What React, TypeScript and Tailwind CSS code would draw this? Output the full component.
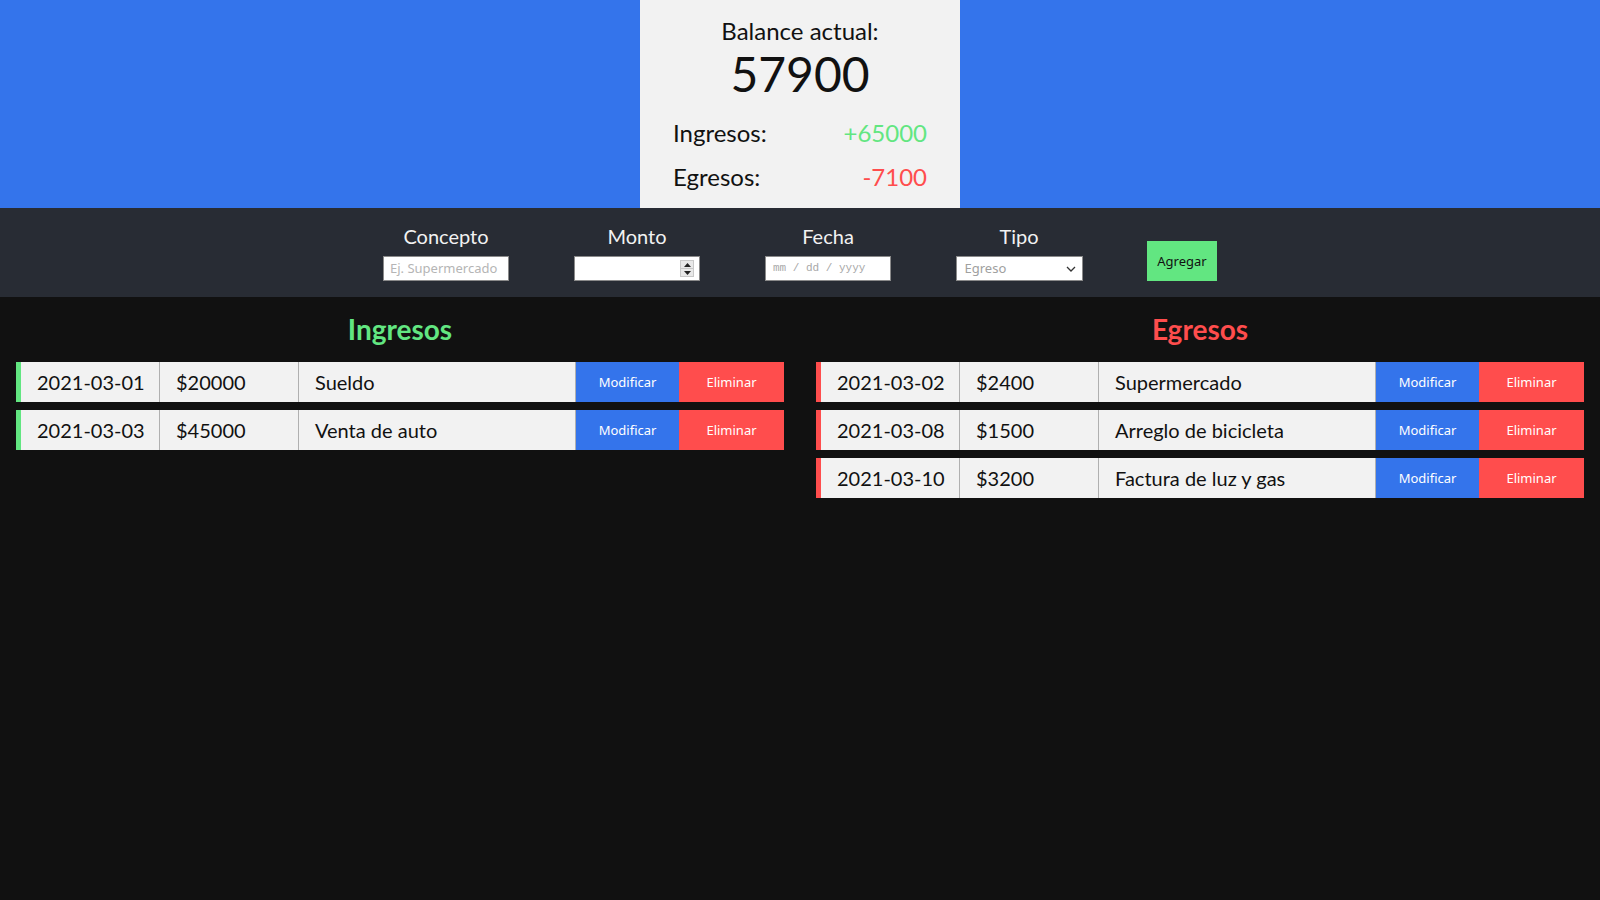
import React from "react";

type Item = { date: string; amount: string; desc: string };

const ingresos: Item[] = [
  { date: "2021-03-01", amount: "$20000", desc: "Sueldo" },
  { date: "2021-03-03", amount: "$45000", desc: "Venta de auto" },
];

const egresos: Item[] = [
  { date: "2021-03-02", amount: "$2400", desc: "Supermercado" },
  { date: "2021-03-08", amount: "$1500", desc: "Arreglo de bicicleta" },
  { date: "2021-03-10", amount: "$3200", desc: "Factura de luz y gas" },
];

const btnFont = { fontFamily: '"Noto Sans", "Open Sans", sans-serif' } as const;

function Row({ item, kind }: { item: Item; kind: "in" | "out" }) {
  return (
    <div
      className={
        "flex h-[40px] bg-[#f2f2f2] text-[20px] text-[#111] border-l-[5px] " +
        (kind === "in" ? "border-[#62e681]" : "border-[#ff4d4d]")
      }
    >
      <div className="w-[139px] shrink-0 border-r border-[#b0b0b0] pl-[16px] flex items-center">
        {item.date}
      </div>
      <div className="w-[139px] shrink-0 border-r border-[#b0b0b0] pl-[16px] flex items-center">
        {item.amount}
      </div>
      <div className="flex-1 border-r border-[#b0b0b0] pl-[16px] flex items-center">
        {item.desc}
      </div>
      <div
        className="w-[103px] shrink-0 bg-[#3474eb] text-white text-[13px] pt-[2px] flex items-center justify-center"
        style={btnFont}
      >
        Modificar
      </div>
      <div
        className="w-[105px] shrink-0 bg-[#ff4d4d] text-white text-[13px] pt-[2px] flex items-center justify-center"
        style={btnFont}
      >
        Eliminar
      </div>
    </div>
  );
}

function Column({ title, items, kind }: { title: string; items: Item[]; kind: "in" | "out" }) {
  return (
    <div className="flex-1 px-[16px] pt-[15px]">
      <h2
        className={
          "text-center font-bold text-[28px] leading-[34px] mb-[16px] " +
          (kind === "in" ? "text-[#62e681]" : "text-[#ff4d4d]")
        }
      >
        {title}
      </h2>
      <div className="flex flex-col gap-[8px]">
        {items.map((it) => (
          <Row key={it.date} item={it} kind={kind} />
        ))}
      </div>
    </div>
  );
}

function Field({ label, children }: { label: string; children: React.ReactNode }) {
  return (
    <div className="flex flex-col items-center w-[126px]">
      <div className="text-[20px] leading-[24px] text-[#f2f2f2] mb-[8px] whitespace-nowrap">{label}</div>
      {children}
    </div>
  );
}

export default function App() {
  return (
    <div
      className="min-h-[900px] bg-[#111111] text-[#111]"
      style={{ fontFamily: 'Lato, "Noto Sans", sans-serif' }}
    >
      <header className="bg-[#3474eb] h-[208px] flex justify-center">
        <div className="w-[320px] bg-[#f2f2f2] pt-[16px] px-[33px] text-[#111]">
          <div className="text-center text-[24px] leading-[29px]">Balance actual:</div>
          <div className="text-center text-[48px] leading-[58px]">57900</div>
          <div className="flex justify-between text-[24px] leading-[29px] mt-[15px]">
            <span>Ingresos:</span>
            <span className="text-[#62e681]">+65000</span>
          </div>
          <div className="flex justify-between text-[24px] leading-[29px] mt-[15px]">
            <span>Egresos:</span>
            <span className="text-[#ff4d4d]">-7100</span>
          </div>
        </div>
      </header>

      <div className="bg-[#282c34] h-[89px] pt-[16px] flex justify-center items-start gap-[65px]">
        <Field label="Concepto">
          <div
            className="w-[126px] h-[25px] bg-white border border-[#8a8a8a] px-[6px] flex items-center text-[13px] text-[#b5b5b5]"
            style={btnFont}
          >
            Ej. Supermercado
          </div>
        </Field>
        <Field label="Monto">
          <div className="w-[126px] h-[25px] bg-white border border-[#8a8a8a] flex items-center justify-end pr-[5px]">
            <div className="w-[14px] h-[17px] flex flex-col border border-[#c8c8c8] bg-[#e8e8e8]">
              <div className="flex-1 flex items-center justify-center border-b border-[#c8c8c8]">
                <svg width="7" height="4" viewBox="0 0 7 4">
                  <path d="M0 4 L3.5 0 L7 4 Z" fill="#222" />
                </svg>
              </div>
              <div className="flex-1 flex items-center justify-center">
                <svg width="7" height="4" viewBox="0 0 7 4">
                  <path d="M0 0 L3.5 4 L7 0 Z" fill="#222" />
                </svg>
              </div>
            </div>
          </div>
        </Field>
        <Field label="Fecha">
          <div
            className="w-[126px] h-[25px] bg-white border border-[#8a8a8a] px-[7px] flex items-center text-[11px] text-[#a8a8a8] whitespace-pre"
            style={{ fontFamily: '"Liberation Mono", monospace' }}
          >
            mm / dd / yyyy
          </div>
        </Field>
        <Field label="Tipo">
          <div
            className="w-[127px] h-[25px] bg-white border border-[#8a8a8a] pl-[8px] pr-[6px] flex items-center justify-between text-[13px] text-[#a0a0a0]"
            style={btnFont}
          >
            <span>Egreso</span>
            <svg width="10" height="6" viewBox="0 0 10 6" fill="none">
              <path d="M1 1 L5 5 L9 1" stroke="#333" strokeWidth="1.3" />
            </svg>
          </div>
        </Field>
        <div className="pt-[17px]">
          <div
            className="w-[70px] h-[40px] bg-[#62e681] text-[#111] text-[13px] pt-[1px] flex items-center justify-center"
            style={btnFont}
          >
            Agregar
          </div>
        </div>
      </div>

      <main className="flex">
        <Column title="Ingresos" items={ingresos} kind="in" />
        <Column title="Egresos" items={egresos} kind="out" />
      </main>
    </div>
  );
}
